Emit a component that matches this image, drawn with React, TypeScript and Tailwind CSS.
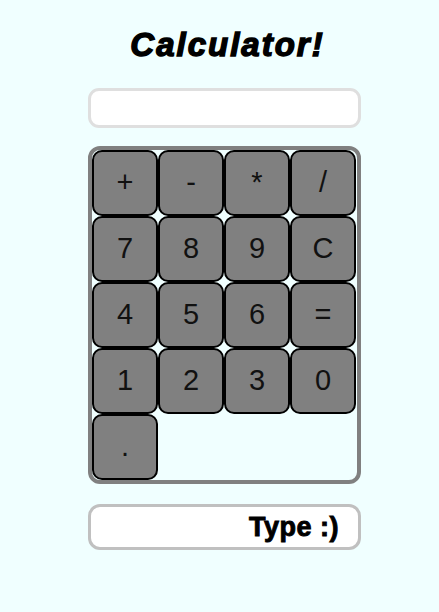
const KEYS = ['+', '-', '*', '/', '7', '8', '9', 'C', '4', '5', '6', '=', '1', '2', '3', '0', '.'];

export default function App() {
  return (
    <div className="min-h-[612px] w-full bg-[#f0ffff] font-['Liberation_Sans',Arial,sans-serif]">
      <div className="flex w-[361px] flex-col pl-[88px]">
        <h1 className="mt-[27px] h-[36px] text-center text-[33px] leading-[36px] font-bold italic tracking-[2px] text-black [-webkit-text-stroke:1.4px_black] pl-[6px]">
          Calculator!
        </h1>
        <div className="mt-[25px] h-[40px] w-[273px] rounded-[11px] border-[3px] border-[#dfdfdf] bg-white" />
        <div className="mt-[18px] h-[338px] w-[273px] rounded-[12px] border-4 border-[#808080] bg-[#f0ffff]">
          <div className="grid grid-cols-[repeat(4,66px)] grid-rows-[repeat(5,66px)]">
            {KEYS.map((k) => (
              <div
                key={k}
                className="flex items-center justify-center rounded-[10px] border-2 border-black bg-[#808080] text-[29px] text-[#111]"
              >
                {k}
              </div>
            ))}
          </div>
        </div>
        <div className="mt-[20px] flex h-[46px] w-[273px] items-center justify-end rounded-[12px] border-[3px] border-[#c0c0c0] bg-white pr-[19px] text-[27px] font-bold tracking-[0.5px] text-black [-webkit-text-stroke:0.9px_black]">
          Type :)
        </div>
      </div>
    </div>
  );
}
